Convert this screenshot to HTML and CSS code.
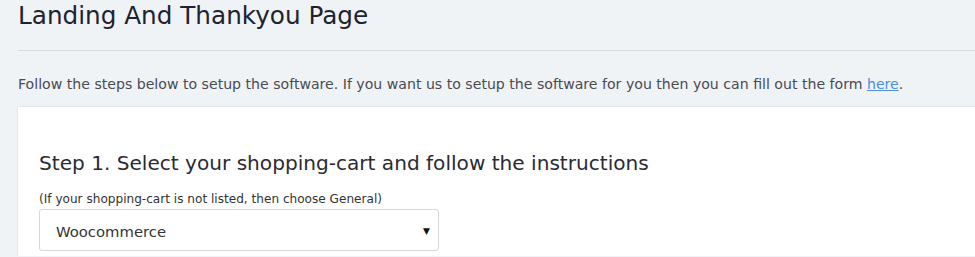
FILE: index.html
```html
<!DOCTYPE html>
<html>
<head>
<meta charset="utf-8">
<link rel="stylesheet" href="styles.css">
</head>
<body>
<div class="page">
  <header class="page-header">
    <h1 class="title">Landing And Thankyou Page</h1>
  </header>
  <p class="intro">Follow the steps below to setup the software. If you want us to setup the software for you then you can fill out the form <a href="#" class="link">here</a>.</p>
  <section class="card">
    <h2 class="step">Step 1. Select your shopping-cart and follow the instructions</h2>
    <div class="hint">(If your shopping-cart is not listed, then choose General)</div>
    <div class="select">
      <span class="select-value">Woocommerce</span>
      <span class="caret">&#9660;</span>
    </div>
  </section>
</div>
</body>
</html>
```

FILE: styles.css
```css
html, body {
  margin: 0;
  padding: 0;
  background: #eff3f6;
  overflow: hidden;
}
body {
  font-family: "DejaVu Sans", sans-serif;
  color: #333;
}
.page {
  padding-left: 18px;
}
.page-header {
  border-bottom: 1px solid #d6d9dd;
  height: 51px;
  box-sizing: border-box;
}
.title {
  margin: 0;
  padding-top: 1px;
  font-size: 24.7px;
  font-weight: 400;
  line-height: 30px;
  color: #1f2230;
}
.intro {
  margin: 0;
  padding-top: 25px;
  height: 56px;
  box-sizing: border-box;
  font-size: 14.12px;
  line-height: 16px;
  color: #4a4a52;
}
.link {
  color: #4a8fe0;
  text-decoration: underline;
}
.card {
  background: #fff;
  padding: 44px 21px 5px;
  box-shadow: 0 0 2px rgba(0,0,0,0.12);
}
.step {
  margin: 0;
  font-size: 20.1px;
  font-weight: 400;
  line-height: 24px;
  color: #2a2b33;
}
.hint {
  margin-top: 17px;
  font-size: 12.1px;
  line-height: 14px;
  color: #333;
}
.select {
  margin-top: 3px;
  width: 400px;
  height: 42px;
  box-sizing: border-box;
  border: 1px solid #d8d8d8;
  border-radius: 3px;
  display: flex;
  align-items: center;
  justify-content: space-between;
  padding: 2px 8px 0 16px;
}
.select-value {
  font-size: 14.8px;
  color: #333;
}
.caret {
  font-size: 9px;
  color: #111;
}
```
